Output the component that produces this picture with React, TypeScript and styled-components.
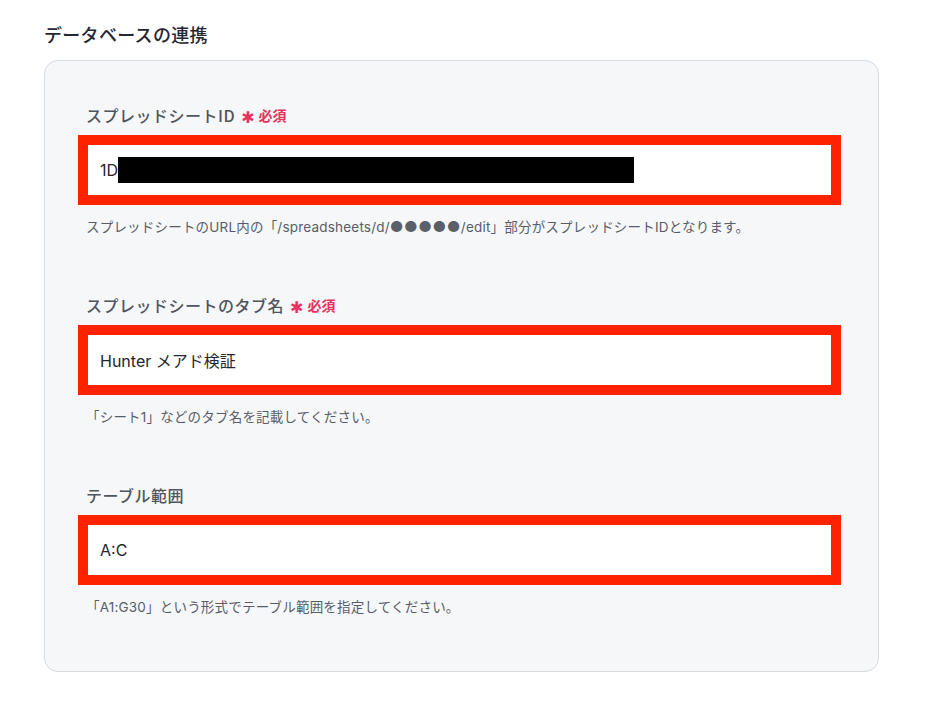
import React from "react";
import styled, { createGlobalStyle } from "styled-components";

const Global = createGlobalStyle`
  html, body { margin: 0; padding: 0; background: #ffffff; }
  body { font-family: Inter, "Noto Sans CJK JP", sans-serif; color: #222; }
`;

const Page = styled.div`
  padding: 22px 50px 0 44px;
  width: 929px;
  box-sizing: border-box;
`;

const Title = styled.h2`
  margin: 0 0 14px;
  font-size: 18px;
  line-height: 24px;
  font-weight: 500;
  letter-spacing: 0.3px;
  color: #252830;
  font-family: "Noto Sans CJK JP", sans-serif;
`;

const Card = styled.div`
  width: 835px;
  box-sizing: border-box;
  background: #f6f7f9;
  border: 1px solid #d6dae1;
  border-radius: 14px;
  padding: 43px 47px 55px 41px;
  display: flex;
  flex-direction: column;
  gap: 58px;
`;

const Field = styled.div`
  display: flex;
  flex-direction: column;
`;

const Label = styled.div`
  display: flex;
  align-items: center;
  font-family: "Noto Sans CJK JP", sans-serif;
  font-size: 16px;
  line-height: 22px;
  font-weight: 500;
  letter-spacing: 0.5px;
  color: #4f555f;
`;

const Required = styled.span`
  display: inline-flex;
  align-items: center;
  gap: 4px;
  margin-left: 6px;
  color: #e8315b;
  font-size: 14px;
  font-weight: 600;
  letter-spacing: 0;
`;

const Star = styled.span`
  font-size: 16px;
  line-height: 14px;
  padding-top: 5px;
  font-family: "DejaVu Sans", sans-serif;
`;

const Highlight = styled.div`
  margin: 9px -10px 0 -8px;
  border: 10px solid #fe2200;
  background: #ffffff;
`;

const Input = styled.div`
  height: 50px;
  box-sizing: border-box;
  padding: 0 12px 0 12px;
  display: flex;
  align-items: center;
  font-family: Inter, "Noto Sans CJK JP", sans-serif;
  font-size: 16px;
  color: #23262d;
`;

const Redacted = styled.span`
  display: inline-block;
  width: 516px;
  height: 26px;
  background: #000;
`;

const Help = styled.div`
  margin-top: 13px;
  font-family: Inter, "Noto Sans CJK JP", sans-serif;
  font-size: 13.5px;
  line-height: 18px;
  letter-spacing: 0.2px;
  color: #575d68;
`;

const Dots = styled.span`
  font-size: 15px;
  color: #5a5f69;
  letter-spacing: 0.5px;
`;

export default function App() {
  return (
    <>
      <Global />
      <Page>
        <Title>データベースの連携</Title>
        <Card>
          <Field>
            <Label>
              スプレッドシートID
              <Required>
                <Star>✱</Star>必須
              </Required>
            </Label>
            <Highlight>
              <Input>
                1D<Redacted />
              </Input>
            </Highlight>
            <Help>
              スプレッドシートのURL内の「/spreadsheets/d/<Dots>●●●●●</Dots>/edit」部分がスプレッドシートIDとなります。
            </Help>
          </Field>
          <Field>
            <Label>
              スプレッドシートのタブ名
              <Required>
                <Star>✱</Star>必須
              </Required>
            </Label>
            <Highlight>
              <Input>Hunter メアド検証</Input>
            </Highlight>
            <Help>「シート1」などのタブ名を記載してください。</Help>
          </Field>
          <Field>
            <Label>テーブル範囲</Label>
            <Highlight>
              <Input>A:C</Input>
            </Highlight>
            <Help>「A1:G30」という形式でテーブル範囲を指定してください。</Help>
          </Field>
        </Card>
      </Page>
    </>
  );
}
